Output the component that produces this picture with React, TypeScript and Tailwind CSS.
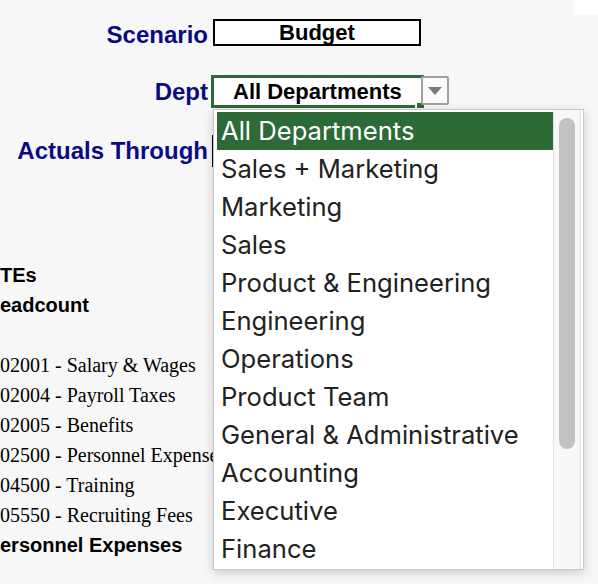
const departments = [
  'All Departments',
  'Sales + Marketing',
  'Marketing',
  'Sales',
  'Product & Engineering',
  'Engineering',
  'Operations',
  'Product Team',
  'General & Administrative',
  'Accounting',
  'Executive',
  'Finance',
];

const rows: { text: string; bold?: boolean }[] = [
  { text: 'TEs', bold: true },
  { text: 'eadcount', bold: true },
  { text: '' },
  { text: '02001 - Salary & Wages' },
  { text: '02004 - Payroll Taxes' },
  { text: '02005 - Benefits' },
  { text: '02500 - Personnel Expenses' },
  { text: '04500 - Training' },
  { text: '05550 - Recruiting Fees' },
  { text: 'ersonnel Expenses', bold: true },
];

const arial = "font-['Liberation_Sans',Arial,sans-serif]";

function DeptDropdown() {
  return (
    <div className="absolute left-[213px] top-[109px] flex h-[461px] w-[371px] border border-[#c9c9c9] bg-white shadow-[0_3px_10px_rgba(0,0,0,0.18)]">
      <ul className="w-[339px] pl-[3px] pt-[2px]">
        {departments.map((d, i) => (
          <li
            key={d}
            className={`flex h-[38px] items-center whitespace-nowrap pl-[4px] font-['Inter',sans-serif] text-[25.6px] ${
              i === 0 ? 'bg-[#2d6a37] text-white' : 'text-[#222]'
            }`}
          >
            {d}
          </li>
        ))}
      </ul>
      <div className="flex w-[28px] justify-center border-x border-[#e3e3e3] bg-[#f8f8f8] pt-[8px]">
        <div className="h-[331px] w-[16px] rounded-full bg-[#c2c2c2]" />
      </div>
    </div>
  );
}

export default function App() {
  return (
    <div className={`relative h-[584px] w-[598px] overflow-hidden bg-[#f7f7f7] ${arial}`}>
      <div className="flex h-[15px] justify-end">
        <div className="w-[25px] bg-white" />
      </div>

      {/* Scenario */}
      <div className="mt-[4px] flex h-[27px]">
        <div className="w-[208px] pt-[2px] text-right text-[24px] font-bold leading-[27px] text-[#0b0b80]">Scenario</div>
        <div className="ml-[5px] w-[208px] border-2 border-black bg-white text-center text-[22px] font-bold leading-[23px] text-black">
          Budget
        </div>
      </div>

      {/* Dept */}
      <div className="mt-[29px] flex h-[33px] items-start">
        <div className="w-[208px] text-right text-[24px] font-bold leading-[33px] text-[#0b0b80]">Dept</div>
        <div className="relative ml-[3px] h-[33px] w-[213px] border-[3px] border-[#2d6a37] bg-white pl-[19px] text-[22px] font-bold leading-[27px] text-black">
          All Departments
          <span className="absolute -bottom-[3px] -right-[3px] h-[7px] w-[9px] border-l-2 border-t-2 border-[#f7f7f7] bg-[#2d6a37]" />
        </div>
        <button className="relative -ml-[3px] mt-[1px] flex h-[29px] w-[28px] items-center justify-center rounded-[2px] border-2 border-[#a0a0a0] bg-[#fbfbfb]">
          <svg width="14" height="8" viewBox="0 0 14 8">
            <path d="M0 0 H14 L7 8 Z" fill="#7a7a7a" />
          </svg>
        </button>
      </div>

      {/* Actuals Through */}
      <div className="mt-[27px] flex h-[32px]">
        <div className="w-[208px] text-right text-[24px] font-bold leading-[32px] text-[#0b0b80]">Actuals Through</div>
        <div className="ml-[4px] w-[2px] bg-black" />
      </div>

      <div className="mt-[93px]">
        {rows.map((r, i) => (
          <div
            key={i}
            className={`h-[30px] whitespace-nowrap text-[20px] leading-[30px] text-black ${
              r.bold ? 'font-bold' : "font-['Liberation_Serif','Times_New_Roman',serif]"
            }`}
          >
            {r.text}
          </div>
        ))}
      </div>

      <DeptDropdown />
    </div>
  );
}
